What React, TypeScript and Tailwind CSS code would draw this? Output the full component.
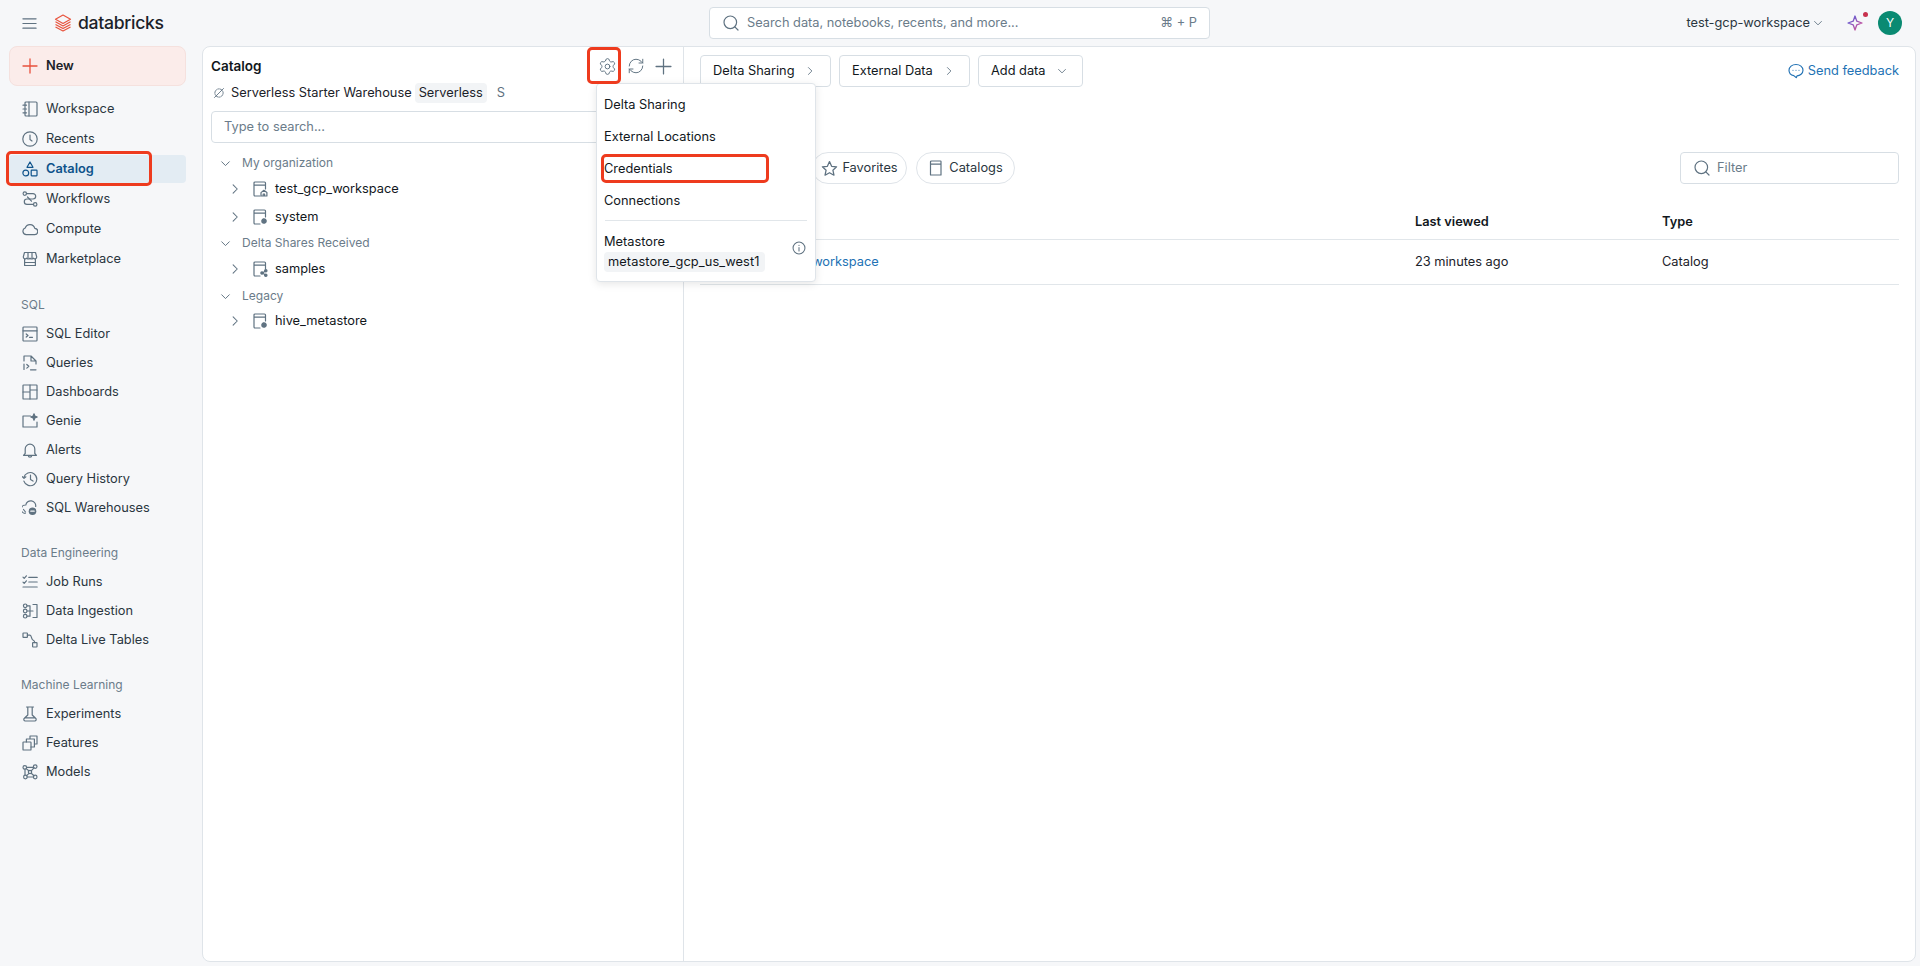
import React from "react";
import { Settings, RefreshCw } from "lucide-react";

const Ic = ({ children, size = 16, color = "#5f7281", sw = 1.2, className = "" }: { children: React.ReactNode; size?: number; color?: string; sw?: number; className?: string }) => (
  <svg width={size} height={size} viewBox="0 0 16 16" fill="none" stroke={color} strokeWidth={sw} strokeLinecap="round" strokeLinejoin="round" className={`shrink-0 ${className}`}>
    {children}
  </svg>
);

const icons: Record<string, React.ReactNode> = {
  workspace: (<><rect x="3" y="1" width="12" height="14" rx="1" /><path d="M7 1v14M1 4.2h3.5M1 8h3.5M1 11.8h3.5" /></>),
  recents: (<><circle cx="8" cy="8" r="7.2" /><path d="M8 4v4.5l2 1.5" /></>),
  catalog: (<><path d="M8 1l3 5.3H5z" /><circle cx="3.8" cy="12" r="2.9" /><rect x="9.2" y="9.2" width="5.8" height="5.6" rx=".5" /></>),
  workflows: (<><circle cx="2.8" cy="2.6" r="1.7" /><circle cx="13.2" cy="13.4" r="1.7" /><path d="M4.5 2.6H11a2.7 2.7 0 010 5.4H5a2.7 2.7 0 000 5.4h6.5" /><path d="M5.5 6l4 4.2" /></>),
  compute: (<path d="M4.2 13.6a3.4 3.4 0 01-1-6.6 5 5 0 019.6.4 3.1 3.1 0 01-.4 6.2z" />),
  marketplace: (<><path d="M2.5 1.5h11l1.2 4.3a2 2 0 01-3.5 1.4A2.3 2.3 0 018 7.2a2.3 2.3 0 01-3.2 0A2 2 0 011.3 5.8z" /><path d="M2.6 8v6.5h10.8V8M6 1.5v5.5M10 1.5v5.5M2.6 11.5h10.8" /></>),
  sqleditor: (<><rect x="1" y="1" width="14" height="14" rx=".8" /><path d="M1 4.8h14M4.2 8l1.8 1.5-1.8 1.5M7.5 11.3h3" /></>),
  queries: (<><path d="M2 6V1h7l5 5v3M9 1v5h5M2 9v5.5" /><path d="M4.8 9.5l2 1.8-2 1.8M8.5 14.8H14" /></>),
  dashboards: (<><rect x="1" y="1" width="14" height="14" rx=".6" /><path d="M8 1v14M1 8h7M8 6h7" /></>),
  genie: (<><path d="M8.5 3H1v11h14V9" /><path d="M12 .8l.9 2.3 2.3.9-2.3.9-.9 2.3-.9-2.3-2.3-.9 2.3-.9z" fill="#5f7281" /></>),
  alerts: (<><path d="M3.2 11.5V7a4.8 4.8 0 019.6 0v4.5l1.7 1.8h-13zM6.3 13.5a1.7 1.7 0 003.4 0" /></>),
  history: (<><path d="M1.8 6.5a6.6 6.6 0 11.1 3.6" /><path d="M.3 5.6l1.7 1.8 1.9-1.6M8.5 4.2v4.4l2.5 1.5" /></>),
  warehouses: (<><path d="M3.2 13.5A4.2 4.2 0 013.8 5a5 5 0 019.9 1.4" /><path d="M1.5 9.5L3.5 12" /><circle cx="10.5" cy="11.2" r="3.8" fill="#5f7281" stroke="none" /><path d="M8.8 11.2h3.4" stroke="#f6f7f9" /></>),
  jobruns: (<><path d="M1 3.2l1.2 1.2 2.2-2.6M1 8.2l1.2 1.2 2.2-2.6M6.8 3.4h8.4M6.8 8h8.4M1 13h14.2" /></>),
  ingestion: (<><circle cx="3.2" cy="2.8" r="1.8" /><circle cx="3.2" cy="8" r="1.8" /><circle cx="3.2" cy="13.2" r="1.8" /><path d="M5 2.8h3v10.4H5M5 8h6M11 1.5h4v13h-4" /></>),
  delta: (<><rect x="1" y="1" width="4.4" height="4.4" rx=".5" /><rect x="10.6" y="10.6" width="4.4" height="4.4" rx=".5" /><path d="M5.4 3.2H8c1.6 0 1.2 3.8 2.6 4.6 2 .9 2.2 1.6 2.2 2.8" /></>),
  experiments: (<><path d="M4.5 1h7M5.8 1v8L2.4 12.3a1.5 1.5 0 001 2.7h9.2a1.5 1.5 0 001-2.7L10.2 9V1M2.6 11.8h10.8" /></>),
  features: (<><rect x="1" y="7" width="8" height="8" rx=".6" /><path d="M4.4 7V4h8v8H9M8 4V1h7v8h-2.6" /></>),
  models: (<><circle cx="2.8" cy="3.4" r="1.8" /><circle cx="13.2" cy="2.6" r="1.8" /><circle cx="3.4" cy="13" r="1.8" /><circle cx="13.2" cy="13" r="1.8" /><circle cx="8" cy="8" r="1.7" /><path d="M4.6 3.3h6.8M4.2 4.6l2.6 2.2M9.2 6.8l2.8-3M3 5.2v6M4.6 11.6L7 9.4M9.2 9.2l2.8 2.6M5.2 13h6.2" /></>),
};

const Nav = ({ icon, label, h = "h-[29px]" }: { icon: string; label: string; h?: string }) => (
  <div className={`flex items-center ${h} pl-[22px] gap-[8px] text-[#2a3640]`}>
    <Ic>{icons[icon]}</Ic>
    <span>{label}</span>
  </div>
);

const Section = ({ title, mt, children }: { title: string; mt: string; children: React.ReactNode }) => (
  <div className={mt}>
    <div className="h-[29px] flex items-center pl-[21px] text-[#6b7c8a] text-[12px]">{title}</div>
    {children}
  </div>
);

const Chevron = ({ dir, size = 13, color = "#5f7281" }: { dir: "r" | "d"; size?: number; color?: string }) => (
  <Ic size={size} color={color} sw={1.4}>{dir === "r" ? <path d="M5.5 2.5L11 8l-5.5 5.5" /> : <path d="M2.5 5.5L8 11l5.5-5.5" />}</Ic>
);

const SearchIc = ({ size = 16 }: { size?: number }) => (
  <Ic size={size} sw={1.2}><circle cx="7.3" cy="7.3" r="6.3" /><path d="M11.8 11.8l3.2 3.2" /></Ic>
);

const BookIc = ({ badge }: { badge: "home" | "gear" | "share" }) => (
  <Ic size={16}>
    <path d="M8 15H3a1 1 0 01-1-1V2a1 1 0 011-1h9.5a1 1 0 011 1v6M2 4.2h11.5" />
    {badge === "home" && <path d="M9 15v-3.4l2.9-2.3 3 2.3V15zM11.2 15v-2h1.4v2" />}
    {badge === "gear" && <circle cx="12" cy="12" r="2" fill="#5f7281" strokeWidth={1.6} strokeDasharray="1.2 .8" />}
    {badge === "share" && <><path d="M10.5 12l3-2M10.5 12l3 2" /><circle cx="10" cy="12" r="1.2" fill="#5f7281" /><circle cx="13.8" cy="9.8" r="1.2" fill="#5f7281" /><circle cx="13.8" cy="14.2" r="1.2" fill="#5f7281" /></>}
  </Ic>
);

const Group = ({ label, h }: { label: string; h: string }) => (
  <div className={`flex items-center ${h} pl-[9px] gap-[11px] text-[#6b7c8a] text-[12px]`}>
    <Chevron dir="d" size={11} />
    <span>{label}</span>
  </div>
);

const Leaf = ({ label, badge, h }: { label: string; badge: "home" | "gear" | "share"; h: string }) => (
  <div className={`flex items-center ${h} pl-[18px] text-[#11171c]`}>
    <Chevron dir="r" size={12} />
    <span className="w-[11px]" />
    <BookIc badge={badge} />
    <span className="ml-[7px]">{label}</span>
  </div>
);

const OutlineBtn = ({ label, w, dir }: { label: string; w: string; dir: "r" | "d" }) => (
  <div className={`${w} h-[32px] flex items-center justify-between pl-[12px] pr-[15px] border border-[#d7dee4] rounded-[4px] bg-white text-[#11171c]`}>
    <span>{label}</span>
    <Chevron dir={dir} size={10} />
  </div>
);

const Pill = ({ w, children }: { w: string; children: React.ReactNode }) => (
  <div className={`${w} h-[32px] flex items-center justify-center gap-[4px] border border-[#dfe4e9] rounded-full text-[#2a3640]`}>{children}</div>
);

const MenuItem = ({ label }: { label: string }) => (
  <div className="h-[32px] flex items-center pl-[7px] text-[#11171c]">{label}</div>
);

export default function App() {
  return (
    <div className="relative h-screen w-full overflow-hidden flex flex-col bg-[#f6f7f9] text-[12.8px] text-[#11171c] font-[family-name:Inter,sans-serif]">
      {/* Top bar */}
      <header className="h-[46px] shrink-0 flex items-center">
        <div className="w-[709px] flex items-center pl-[22px]">
          <Ic size={15} sw={1.3}><path d="M1 3h14M1 8h14M1 13h14" /></Ic>
          <svg width="18" height="18" viewBox="0 0 18 18" className="ml-[17px]" fill="none" stroke="#e8543e" strokeWidth="1.2" strokeLinejoin="round">
            <path d="M9 1L1.5 5.2 9 9.4l7.5-4.2z" />
            <path d="M1.5 7.8L9 12l7.5-4.2M1.5 10.4L9 14.6l7.5-4.2M1.5 13L9 17l7.5-4" />
          </svg>
          <span className="ml-[6px] text-[17.6px] font-medium tracking-[-0.3px] text-[#1b2229] leading-none">databricks</span>
        </div>
        <div className="w-[501px] h-[32px] flex items-center bg-white border border-[#d7dee4] rounded-[4px] pl-[13px] pr-[12px] gap-[8px]">
          <SearchIc />
          <span className="flex-1 text-[#6b7c8a]">Search data, notebooks, recents, and more...</span>
          <span className="text-[#6b7c8a]">⌘ + P</span>
        </div>
        <div className="flex-1 flex items-center justify-end pr-[18px]">
          <span className="text-[#2a3640]">test-gcp-workspace</span>
          <span className="ml-[3px]"><Chevron dir="d" size={10} /></span>
          <div className="relative ml-[24px]">
            <svg width="16" height="16" viewBox="0 0 16 16" fill="none" strokeWidth="1.3" strokeLinejoin="round">
              <defs>
                <linearGradient id="sp" x1="0" y1="0" x2="1" y2="1">
                  <stop offset="0" stopColor="#4c5fe0" />
                  <stop offset="1" stopColor="#e0508f" />
                </linearGradient>
              </defs>
              <path d="M8 1l1.8 5.2L15 8l-5.2 1.8L8 15l-1.8-5.2L1 8l5.2-1.8z" stroke="url(#sp)" />
            </svg>
            <span className="absolute -top-[3px] -right-[5px] w-[5px] h-[5px] rounded-full bg-[#c8324e]" />
          </div>
          <div className="ml-[15px] w-[24px] h-[24px] rounded-full bg-[#0a8a72] text-white text-[12px] flex items-center justify-center">Y</div>
        </div>
      </header>

      <div className="flex-1 flex min-h-0 pb-[4px] pr-[4px]">
        {/* Sidebar */}
        <aside className="w-[202px] shrink-0">
          <div className="ml-[9px] mr-[16px] h-[40px] flex items-center pl-[12px] gap-[8px] rounded-[8px] bg-[#fbecea] border border-[#f5e1de] font-semibold">
            <Ic size={16} color="#e8503c" sw={1.3}><path d="M8 1v14M1 8h14" /></Ic>
            <span className="text-[#1b2229]">New</span>
          </div>
          <div className="mt-[8px] pr-[16px]">
            <Nav icon="workspace" label="Workspace" h="h-[30px]" />
            <Nav icon="recents" label="Recents" h="h-[30px]" />
            <div className="h-[30px] flex items-center pl-[9px]">
              <div className="w-full h-[28px] flex items-center pl-[13px] gap-[8px] bg-[#e3ecf3] rounded-[4px] text-[#0e538b] font-semibold">
                <Ic color="#0e538b">{icons.catalog}</Ic>
                <span>Catalog</span>
              </div>
            </div>
            <Nav icon="workflows" label="Workflows" h="h-[30px]" />
            <Nav icon="compute" label="Compute" h="h-[30px]" />
            <Nav icon="marketplace" label="Marketplace" h="h-[30px]" />
          </div>
          <Section title="SQL" mt="mt-[16px]">
            <Nav icon="sqleditor" label="SQL Editor" />
            <Nav icon="queries" label="Queries" />
            <Nav icon="dashboards" label="Dashboards" />
            <Nav icon="genie" label="Genie" />
            <Nav icon="alerts" label="Alerts" />
            <Nav icon="history" label="Query History" />
            <Nav icon="warehouses" label="SQL Warehouses" />
          </Section>
          <Section title="Data Engineering" mt="mt-[16px]">
            <Nav icon="jobruns" label="Job Runs" />
            <Nav icon="ingestion" label="Data Ingestion" />
            <Nav icon="delta" label="Delta Live Tables" />
          </Section>
          <Section title="Machine Learning" mt="mt-[16px]">
            <Nav icon="experiments" label="Experiments" />
            <Nav icon="features" label="Features" />
            <Nav icon="models" label="Models" />
          </Section>
        </aside>

        {/* Main panel */}
        <main className="relative flex-1 flex min-w-0 bg-white border border-[#dfe4e9] rounded-[8px] overflow-hidden">
          {/* Left tree panel */}
          <section className="w-[481px] shrink-0 border-r border-[#dfe4e9] pl-[8px] pr-[10px]">
            <div className="h-[34px] mt-[2px] flex items-center justify-between pr-[1px]">
              <span className="font-semibold text-[13.5px]">Catalog</span>
              <div className="flex items-center gap-[10px] text-[#5f7281]">
                <Settings size={19} strokeWidth={1.2} />
                <RefreshCw size={18} strokeWidth={1.3} />
                <Ic size={17} sw={1.2}><path d="M8 1v14M1 8h14" /></Ic>
              </div>
            </div>
            <div className="h-[20px] flex items-center pl-[2px]">
              <Ic size={12} sw={1.2}><circle cx="8" cy="8" r="5.5" strokeDasharray="2 1.4" /><path d="M2 14L14 2" /></Ic>
              <span className="ml-[6px] text-[#1b2229]">Serverless Starter Warehouse</span>
              <span className="ml-[3px] h-[20px] px-[4px] flex items-center rounded-[4px] bg-[#f2f4f6] text-[#1b2229]">Serverless</span>
              <span className="ml-[10px] text-[#5f7281]">S</span>
            </div>
            <div className="mt-[8px] h-[32px] flex items-center pl-[12px] border border-[#d7dee4] rounded-[4px] text-[#6b7c8a]">Type to search...</div>
            <div className="mt-[7px]">
              <Group label="My organization" h="h-[26px]" />
              <Leaf label="test_gcp_workspace" badge="home" h="h-[26px]" />
              <Leaf label="system" badge="gear" h="h-[30px]" />
              <Group label="Delta Shares Received" h="h-[22px]" />
              <Leaf label="samples" badge="share" h="h-[30px]" />
              <Group label="Legacy" h="h-[24px]" />
              <Leaf label="hive_metastore" badge="gear" h="h-[26px]" />
            </div>
          </section>

          {/* Right content */}
          <section className="flex-1 min-w-0 pl-[16px] pr-[16px]">
            <div className="mt-[8px] h-[32px] flex items-center justify-between">
              <div className="flex gap-[8px]">
                <OutlineBtn label="Delta Sharing" w="w-[131px]" dir="r" />
                <OutlineBtn label="External Data" w="w-[131px]" dir="r" />
                <OutlineBtn label="Add data" w="w-[105px]" dir="d" />
              </div>
              <div className="flex items-center gap-[4px] text-[#2272b4]">
                <Ic size={16} color="#2272b4" sw={1.15}>
                  <path d="M8 1.5c3.9 0 7 2.4 7 5.7s-3.1 5.6-6 5.6l-.6 1.9-2.6-2.1C3.2 12.1 1 10 1 7.2 1 3.9 4.1 1.5 8 1.5z" />
                  <path d="M5 7.2h.01M8 7.2h.01M11 7.2h.01" />
                </Ic>
                <span>Send feedback</span>
              </div>
            </div>
            <div className="mt-[65px] h-[32px] flex items-center justify-between">
              <div className="flex gap-[9px]">
                <Pill w="w-[103px]"><Ic><circle cx="8" cy="8" r="7" /><path d="M8 4v4.5l2 1.5" /></Ic><span>Recents</span></Pill>
                <Pill w="w-[95px]">
                  <Ic size={17}><path d="M8 1.5l2 4.4 4.7.5-3.5 3.2 1 4.7L8 12l-4.2 2.3 1-4.7L1.3 6.4l4.7-.5z" /></Ic>
                  <span>Favorites</span>
                </Pill>
                <Pill w="w-[99px]">
                  <Ic size={16}><path d="M2.5 15V2a1 1 0 011-1h9a.5.5 0 01.5.5V15zM2.5 4.2H13" /></Ic>
                  <span className="ml-[1px]">Catalogs</span>
                </Pill>
              </div>
              <div className="w-[219px] h-[32px] flex items-center pl-[13px] gap-[7px] border border-[#d7dee4] rounded-[4px] text-[#6b7c8a]">
                <SearchIc size={16} />
                <span>Filter</span>
              </div>
            </div>
            <div className="mt-[21px] h-[35px] grid grid-cols-[715px_247px_1fr] items-center border-b border-[#e1e6ea] font-semibold">
              <span>Name</span>
              <span>Last viewed</span>
              <span>Type</span>
            </div>
            <div className="h-[45px] grid grid-cols-[715px_247px_1fr] items-center border-b border-[#e1e6ea]">
              <span className="pl-[55px] text-[#2272b4]">test_gcp_workspace</span>
              <span className="text-[#1b2229]">23 minutes ago</span>
              <span className="text-[#1b2229]">Catalog</span>
            </div>
          </section>

          {/* Dropdown menu */}
          <div className="absolute left-[393px] top-[36px] w-[220px] h-[199px] bg-white border border-[#dfe4e9] rounded-[4px] shadow-[0_2px_8px_rgba(0,0,0,0.10)] py-[5px]">
            <MenuItem label="Delta Sharing" />
            <MenuItem label="External Locations" />
            <MenuItem label="Credentials" />
            <MenuItem label="Connections" />
            <div className="mx-[8px] mt-[3px] border-t border-[#e1e6ea]" />
            <div className="relative pl-[7px] pt-[13px] leading-[16px]">
              <div>Metastore</div>
              <div className="mt-[2px] w-[161px] h-[20px] flex items-center px-[4px] rounded-[4px] bg-[#f2f4f6] tracking-[0.1px]">metastore_gcp_us_west1</div>
              <span className="absolute right-[9px] top-[20px]">
                <Ic size={14} sw={1.2}><circle cx="8" cy="8" r="6.8" /><path d="M8 7.5v3.8M8 4.8v.2" /></Ic>
              </span>
            </div>
          </div>
        </main>
      </div>

      {/* Red annotation boxes */}
      <div className="absolute left-[6px] top-[151px] w-[146px] h-[35px] border-[3px] border-[#ee3b1e] rounded-[5px]" />
      <div className="absolute left-[587px] top-[47px] w-[34px] h-[37px] border-[3px] border-[#ee3b1e] rounded-[5px]" />
      <div className="absolute left-[601px] top-[154px] w-[168px] h-[29px] border-[3px] border-[#ee3b1e] rounded-[5px]" />
    </div>
  );
}
